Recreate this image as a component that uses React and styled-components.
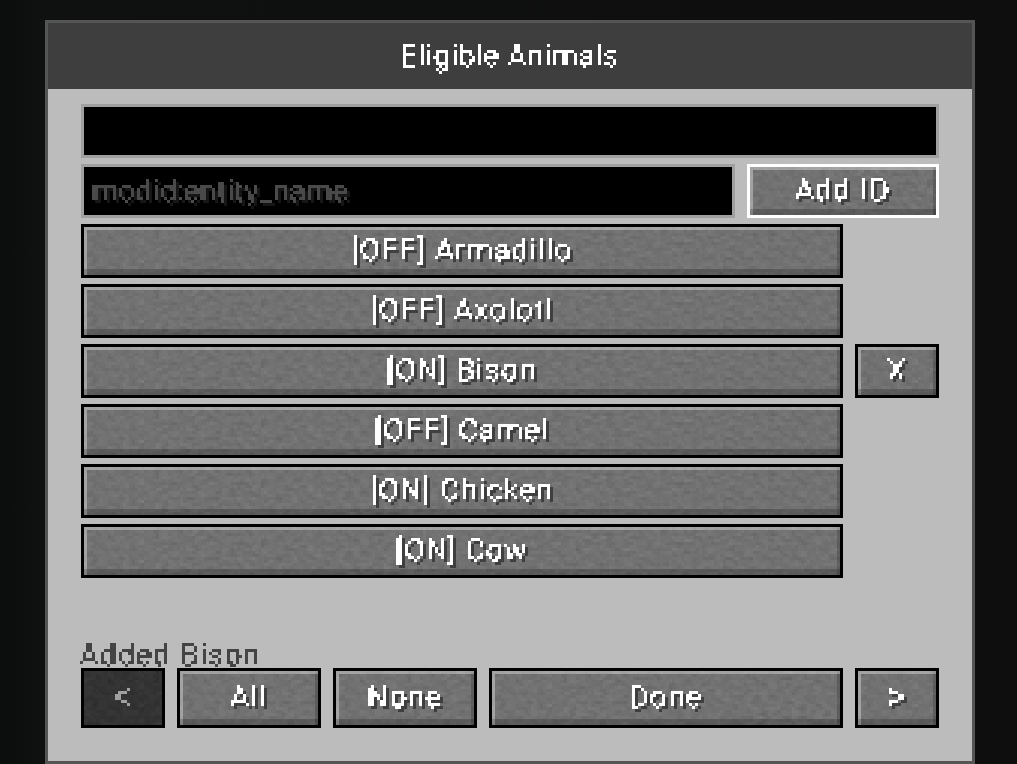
import React from "react";
import styled, { createGlobalStyle } from "styled-components";

const stone = (mean, amp) => {
  const offset = (mean - 0.5 * amp).toFixed(3);
  const row = `${amp} 0 0 0 ${offset}`;
  const svg = `<svg xmlns='http://www.w3.org/2000/svg' width='960' height='90'><filter id='n' x='0' y='0' width='100%' height='100%' color-interpolation-filters='sRGB'><feTurbulence type='fractalNoise' baseFrequency='0.13 0.2' numOctaves='3' seed='7' result='t'/><feColorMatrix in='t' type='matrix' values='${row} ${row} ${row} 0 0 0 0 1' result='g'/><feFlood x='1' y='1' width='1' height='1'/><feComposite width='3' height='3'/><feTile result='a'/><feComposite in='g' in2='a' operator='in'/><feMorphology operator='dilate' radius='1'/></filter><rect width='960' height='90' filter='url(#n)'/></svg>`;
  return `url("data:image/svg+xml,${encodeURIComponent(svg)}")`;
};
const stoneOn = stone(0.445, 0.12);
const stoneOff = stone(0.2, 0.09);

const Global = createGlobalStyle`
  html, body { margin: 0; padding: 0; background: #0d0e0e; }
  body { width: 1017px; height: 764px; overflow: hidden; font-family: Roboto, "Liberation Sans", Arial, sans-serif; }
`;

const Page = styled.div`
  width: 1017px;
  height: 764px;
  padding: 20px 42px 0 45px;
  box-sizing: border-box;
  background: linear-gradient(90deg, #0b0c0c 0, #0f1010 40px, #0e0e0e 100%);
`;

const Panel = styled.div`
  height: 744px;
  box-sizing: border-box;
  border: 3px solid #555555;
  background: #bcbcbc;
  display: flex;
  flex-direction: column;
`;

const Label = styled.span`
  display: inline-block;
  padding: 6px 3px 9px;
  margin: -6px -3px -9px;
  font-size: ${(p) => p.$size || 29}px;
  font-weight: 300;
  line-height: 30px;
  letter-spacing: ${(p) => p.$track ?? 1.8}px;
  white-space: pre;
  color: ${(p) => p.$color || "#ffffff"};
  filter: url(#mc) ${(p) => (p.$shadow ? `drop-shadow(3px 3px 0 ${p.$shadow})` : "")};
`;

const TitleBar = styled.div`
  height: 66px;
  flex: none;
  background: #3e3e3e;
  display: flex;
  align-items: center;
  justify-content: center;
`;

const Body = styled.div`
  flex: 1;
  padding: 15px 33px 0;
  display: flex;
  flex-direction: column;
`;

const Field = styled.div`
  height: 54px;
  box-sizing: border-box;
  border: 3px solid #a0a0a0;
  background: #000;
  flex: ${(p) => (p.$grow ? 1 : "none")};
  padding-left: 8px;
  display: flex;
  align-items: center;
`;

const Row = styled.div`
  display: flex;
  gap: 12px;
  margin-top: ${(p) => (p.$flush ? 0 : 6)}px;
`;

const Button = styled.div`
  height: ${(p) => p.$h || 54}px;
  width: ${(p) => (p.$w ? `${p.$w}px` : "auto")};
  flex: ${(p) => (p.$w ? "none" : 1)};
  box-sizing: border-box;
  border: 3px solid ${(p) => (p.$focus ? "#ffffff" : "#000000")};
  padding-bottom: 3px;
  background-color: ${(p) => (p.$off ? "#343434" : "#707070")};
  background-image: ${(p) => (p.$off ? stoneOff : stoneOn)};
  box-shadow: ${(p) =>
    p.$off
      ? "none"
      : "inset 0 -6px 0 rgba(0,0,0,.2), inset 3px 3px 0 rgba(255,255,255,.34), inset -3px 0 0 rgba(0,0,0,.18)"};
  display: flex;
  align-items: center;
  justify-content: center;
`;

const Spacer = styled.div`
  width: 84px;
  flex: none;
`;

const Status = styled.div`
  margin-top: 64px;
  height: 26px;
  margin-left: -1px;
  display: flex;
  align-items: center;
`;

const HiddenDefs = styled.svg`
  position: absolute;
  width: 0;
  height: 0;
`;

const BtnText = ({ children, size }) => <Label $size={size} $shadow="#3f3f3f">{children}</Label>;

const items = [
  ["[OFF] Armadillo"],
  ["[OFF] Axolotl"],
  ["[ON] Bison", true],
  ["[OFF] Camel"],
  ["[ON] Chicken"],
  ["[ON] Cow"],
];

export default function App() {
  return (
    <Page>
      <Global />
      <HiddenDefs aria-hidden="true">
        <filter id="mc" x="0" y="0" width="100%" height="100%" colorInterpolationFilters="sRGB">
          <feConvolveMatrix order="3" kernelMatrix="1 1 1 1 1 1 1 1 1" divisor="9" preserveAlpha="false" edgeMode="none" result="avg" />
          <feFlood x="1" y="1" width="1" height="1" />
          <feComposite width="3" height="3" />
          <feTile result="a" />
          <feComposite in="avg" in2="a" operator="in" />
          <feComponentTransfer>
            <feFuncA type="discrete" tableValues="0 1 1 1" />
          </feComponentTransfer>
          <feMorphology operator="dilate" radius="1" />
        </filter>
      </HiddenDefs>
      <Panel>
        <TitleBar><Label $track={1.2}>Eligible Animals</Label></TitleBar>
        <Body>
          <Field />
          <Row>
            <Field $grow><Label $track={0.9} $color="#4a4a4a" $shadow="#161616">modid:entity_name</Label></Field>
            <Button $w={192} $focus><BtnText>Add ID</BtnText></Button>
          </Row>
          {items.map(([label, x]) => (
            <Row key={label}>
              <Button><BtnText>{label}</BtnText></Button>
              {x ? <Button $w={84}><BtnText>X</BtnText></Button> : <Spacer />}
            </Row>
          ))}
          <Status><Label $track={1.95} $color="#444444">Added Bison</Label></Status>
          <Row $flush>
            <Button $h={60} $w={84} $off><Label $size={40} $color="#a0a0a0">&lt;</Label></Button>
            <Button $h={60} $w={144}><BtnText>All</BtnText></Button>
            <Button $h={60} $w={144}><BtnText>None</BtnText></Button>
            <Button $h={60}><BtnText>Done</BtnText></Button>
            <Button $h={60} $w={84}><BtnText size={40}>&gt;</BtnText></Button>
          </Row>
        </Body>
      </Panel>
    </Page>
  );
}
